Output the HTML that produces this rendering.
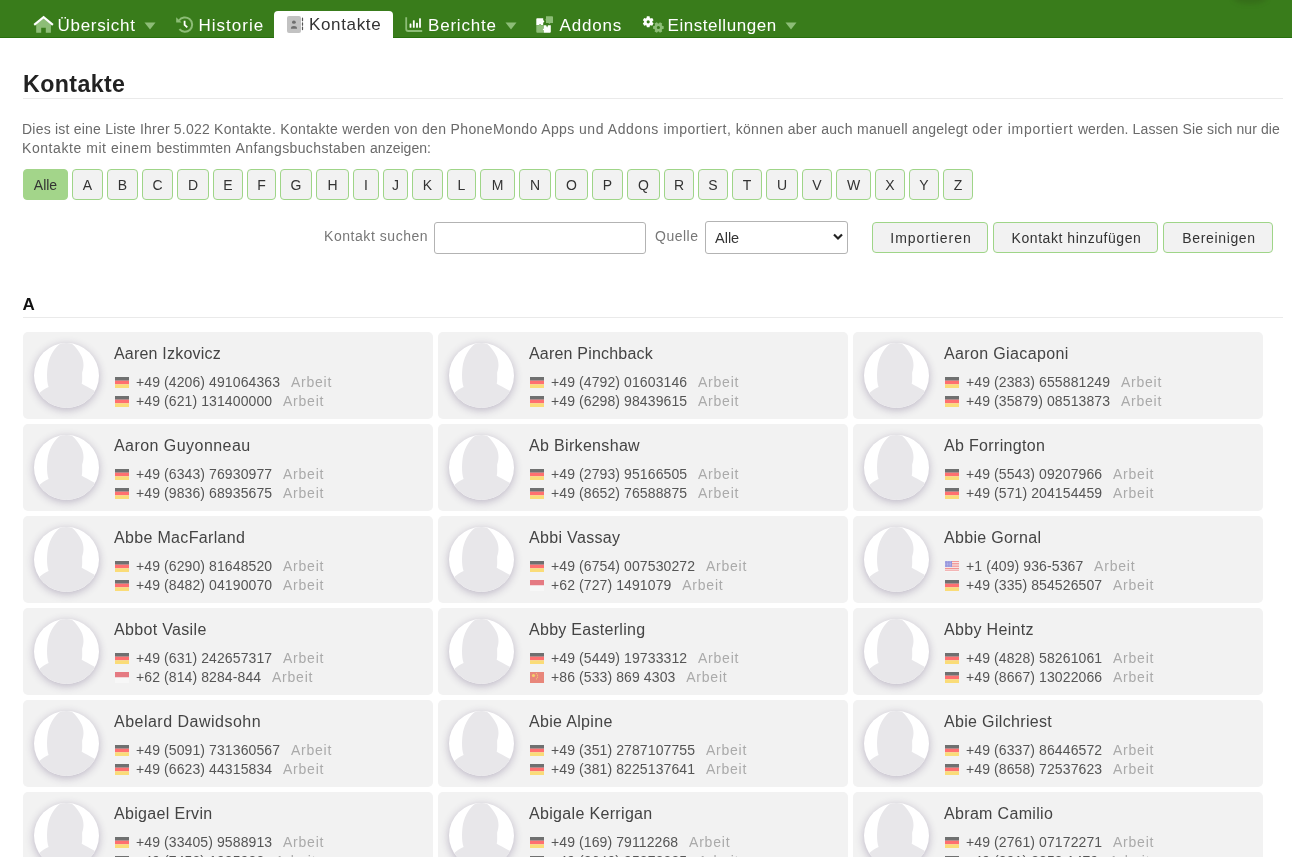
<!DOCTYPE html><html><head><meta charset="utf-8"><title>Kontakte</title><style>
*{box-sizing:border-box}
html,body{will-change:transform;margin:0;padding:0;background:#fff;width:1292px;height:857px;overflow:hidden;font-family:"Liberation Sans",sans-serif}
.t{position:absolute;white-space:nowrap}
.nav{position:absolute;left:0;top:0;width:1292px;height:38px;background:#397c1b;border-bottom:1px solid #27700c}
.navt{color:#fff}
.tab{position:absolute;left:274px;top:11px;width:119px;height:29px;background:#fff;border-radius:4px 4px 0 0}
.ic{position:absolute}
.hr{position:absolute;height:1px;background:#eaeaea}
.para{color:#6a6a6a;letter-spacing:.36px}
.lb{position:absolute;top:169px;height:31px;border:1px solid #9fd588;background:#f2f2f2;border-radius:4px;color:#333;font-size:14px;text-align:center;line-height:31px}
.lb.on{background:#a3d58a;border-color:#a3d58a}
.btn{position:absolute;top:222px;height:31px;border:1px solid #9fd588;background:#f2f2f2;border-radius:4px;color:#333;font-size:14px;text-align:center;line-height:31px;letter-spacing:.4px;padding-left:2px}
.inp{position:absolute;border:1px solid #b3b3b3;border-radius:3px;background:#fff}
.card{position:absolute;width:410px;height:87px;background:#f2f2f2;border-radius:5px;overflow:hidden}
.av{position:absolute;left:11px;top:10.6px;width:65px;height:65px;border-radius:50%;background:#fff;box-shadow:0 2px 9px rgba(60,40,90,.3);overflow:hidden}
.nm{color:#444;letter-spacing:.33px}
.ph{color:#555;letter-spacing:.1px}
.ar{color:#aaa;letter-spacing:.78px}
.flag{position:absolute;width:14px;height:11px}
</style></head><body>
<div class="nav"></div>
<div style="position:absolute;left:1233px;top:-10px;width:34px;height:14px;border-radius:50%;background:rgba(40,60,20,.22);filter:blur(2.5px)"></div>
<div class="tab"></div>
<svg class="ic" style="left:33px;top:15px" width="22" height="19" viewBox="0 0 22 19">
<path d="M3.2 9.2 V17.7 H8.2 V12.8 H12.8 V17.7 H17.9 V9.2 L10.6 3.2 Z" fill="#8dbd77"/>
<path d="M1.2 9.8 L10.6 2.2 L19.9 9.8" fill="none" stroke="#fff" stroke-width="2.2" stroke-linejoin="miter"/>
</svg>
<div class="t navt" style="left:57.5px;top:16.11px;font-size:17px;line-height:20px;letter-spacing:.7px">&Uuml;bersicht</div>
<svg class="ic" style="left:144px;top:21.5px" width="12" height="8" viewBox="0 0 12 8"><path d="M0.5 0.5 H11.5 L6 7.5 Z" fill="#8dbd77"/></svg>
<svg class="ic" style="left:176px;top:16px" width="18" height="18" viewBox="0 0 18 18">
<path d="M3.0 4.5 A7.2 7.2 0 1 1 3.4 13.2" fill="none" stroke="#8dbd77" stroke-width="2"/>
<path d="M0.2 1.2 L0.2 6.6 L5.6 6.6 Z" fill="#8dbd77"/>
<path d="M8.6 4.7 V8.8 L11.3 11.4" fill="none" stroke="#fff" stroke-width="1.8"/>
</svg>
<div class="t navt" style="left:198.5px;top:16.11px;font-size:17px;line-height:20px;letter-spacing:1.0px">Historie</div>
<svg class="ic" style="left:287px;top:16px" width="18" height="18" viewBox="0 0 18 18">
<rect x="0" y="0" width="14" height="17" rx="2" fill="#c2c2c2"/>
<ellipse cx="6.9" cy="6.2" rx="1.9" ry="1.6" fill="#6f6f6f"/>
<path d="M3.9 12.8 C3.9 10.6 5 10 6.9 10 C8.8 10 10.1 10.6 10.1 12.8 Z" fill="#6f6f6f"/>
<path d="M15.5 2.2 V4.7 M15.5 6.9 V9.2 M15.5 11.1 V13.6" stroke="#555" stroke-width="1.2" stroke-linecap="round"/>
</svg>
<div class="t " style="left:309px;top:15.41px;font-size:17px;line-height:20px;color:#333;letter-spacing:.65px">Kontakte</div>
<svg class="ic" style="left:405px;top:17px" width="18" height="16" viewBox="0 0 18 16">
<path d="M1.2 0.2 V12 Q1.2 14 3.2 14 H17.2" fill="none" stroke="#8dbd77" stroke-width="1.8"/>
<rect x="4.6" y="6.5" width="1.8" height="4.3" rx=".5" fill="#fff"/>
<rect x="7.9" y="3.3" width="1.8" height="7.5" rx=".5" fill="#fff"/>
<rect x="11.1" y="5.8" width="1.8" height="5" rx=".5" fill="#fff"/>
<rect x="14.1" y="1.3" width="1.8" height="9.5" rx=".5" fill="#fff"/>
</svg>
<div class="t navt" style="left:428px;top:15.71px;font-size:17px;line-height:20px;letter-spacing:.8px">Berichte</div>
<svg class="ic" style="left:505px;top:21.5px" width="12" height="8" viewBox="0 0 12 8"><path d="M0.5 0.5 H11.5 L6 7.5 Z" fill="#8dbd77"/></svg>
<svg class="ic" style="left:536px;top:16px" width="18" height="17" viewBox="0 0 18 17">
<path d="M0.3 3.1 Q0.3 2.2 1.2 2.2 H7.2 V4.3 Q9.4 5.5 7.2 6.7 V9.2 H5.3 Q4.1 7.2 2.9 9.2 H0.3 Z" fill="#fff"/>
<path d="M10 0.2 H16.1 Q17 0.2 17 1.1 V6.9 H14.3 Q13.4 8.6 12.5 6.9 H10 V4.8 Q8.9 3.6 10 2.4 Z" fill="#8dbd77"/>
<path d="M0.3 9.2 H2.9 Q4.1 7.2 5.3 9.2 H7.8 V12.4 Q5.6 13.4 7.8 14.3 V16.7 H1.2 Q0.3 16.7 0.3 15.8 Z" fill="#8dbd77"/>
<path d="M7.8 9.2 H10.2 L11.1 11.6 L12 9.2 H14.8 V15.8 Q14.8 16.7 13.9 16.7 H7.8 V14.3 Q5.6 13.4 7.8 12.4 Z" fill="#fff"/>
</svg>
<div class="t navt" style="left:559.5px;top:15.71px;font-size:17px;line-height:20px;letter-spacing:.8px">Addons</div>
<svg class="ic" style="left:642px;top:16px" width="24" height="18" viewBox="0 0 24 18">
<path d="M4.51,2.01 L4.85,0.37 L7.55,0.37 L7.89,2.01 L8.64,2.45 L10.23,1.91 L11.58,4.26 L10.32,5.37 L10.32,6.23 L11.58,7.34 L10.23,9.69 L8.64,9.15 L7.89,9.59 L7.55,11.23 L4.85,11.23 L4.51,9.59 L3.76,9.15 L2.17,9.69 L0.82,7.34 L2.08,6.23 L2.08,5.37 L0.82,4.26 L2.17,1.91 L3.76,2.45 Z M7.800000000000001,5.8 A1.6 1.6 0 1 0 4.6,5.8 A1.6 1.6 0 1 0 7.800000000000001,5.8 Z" fill="#fff" fill-rule="evenodd"/>
<path d="M20.12,9.84 L21.74,10.17 L21.74,12.83 L20.12,13.16 L19.69,13.89 L20.22,15.46 L17.92,16.79 L16.83,15.55 L15.97,15.55 L14.88,16.79 L12.58,15.46 L13.11,13.89 L12.68,13.16 L11.06,12.83 L11.06,10.17 L12.68,9.84 L13.11,9.11 L12.58,7.54 L14.88,6.21 L15.97,7.45 L16.83,7.45 L17.92,6.21 L20.22,7.54 L19.69,9.11 Z M18.0,11.5 A1.6 1.6 0 1 0 14.799999999999999,11.5 A1.6 1.6 0 1 0 18.0,11.5 Z" fill="#8dbd77" fill-rule="evenodd"/>
</svg>
<div class="t navt" style="left:667.5px;top:15.71px;font-size:17px;line-height:20px;letter-spacing:.55px">Einstellungen</div>
<svg class="ic" style="left:784.5px;top:21.5px" width="12" height="8" viewBox="0 0 12 8"><path d="M0.5 0.5 H11.5 L6 7.5 Z" fill="#8dbd77"/></svg>
<div class="t " style="left:23px;top:70.26px;font-size:23.2px;line-height:28px;font-weight:bold;color:#222;letter-spacing:.4px">Kontakte</div>
<div class="hr" style="left:23px;top:98px;width:1260px"></div>
<div class="t para" style="left:22px;top:119.15px;font-size:14px;line-height:20px;letter-spacing:0.215px">Dies ist eine Liste Ihrer 5.022</div>
<div class="t para" style="left:214.1px;top:119.15px;font-size:14px;line-height:20px;letter-spacing:0.316px">Kontakte. Kontakte</div>
<div class="t para" style="left:342.3px;top:119.15px;font-size:14px;line-height:20px;letter-spacing:0.311px">werden von den</div>
<div class="t para" style="left:450.5px;top:119.15px;font-size:14px;line-height:20px;letter-spacing:0.386px">PhoneMondo Apps</div>
<div class="t para" style="left:578.9px;top:119.15px;font-size:14px;line-height:20px;letter-spacing:0.604px">und Addons</div>
<div class="t para" style="left:663.4px;top:119.15px;font-size:14px;line-height:20px;letter-spacing:0.515px">importiert,</div>
<div class="t para" style="left:735.7px;top:119.15px;font-size:14px;line-height:20px;letter-spacing:0.313px">können aber auch</div>
<div class="t para" style="left:857px;top:119.15px;font-size:14px;line-height:20px;letter-spacing:0.275px">manuell angelegt</div>
<div class="t para" style="left:972.2px;top:119.15px;font-size:14px;line-height:20px;letter-spacing:0.721px">oder importiert</div>
<div class="t para" style="left:1077.9px;top:119.15px;font-size:14px;line-height:20px;letter-spacing:0.124px">werden. Lassen</div>
<div class="t para" style="left:1182.5px;top:119.15px;font-size:14px;line-height:20px;letter-spacing:0.111px">Sie sich nur die</div>
<div class="t para" style="left:22px;top:138.15px;font-size:14px;line-height:20px;letter-spacing:0.561px">Kontakte mit einem</div>
<div class="t para" style="left:156.4px;top:138.15px;font-size:14px;line-height:20px;letter-spacing:0.259px">bestimmten</div>
<div class="t para" style="left:235.5px;top:138.15px;font-size:14px;line-height:20px;letter-spacing:0.38px">Anfangsbuchstaben</div>
<div class="t para" style="left:370px;top:138.15px;font-size:14px;line-height:20px;letter-spacing:0.031px">anzeigen:</div>
<div class="lb on" style="left:23px;width:45px">Alle</div>
<div class="lb" style="left:72px;width:31px">A</div>
<div class="lb" style="left:107px;width:31px">B</div>
<div class="lb" style="left:142px;width:31px">C</div>
<div class="lb" style="left:177px;width:32px">D</div>
<div class="lb" style="left:213px;width:30px">E</div>
<div class="lb" style="left:247px;width:29px">F</div>
<div class="lb" style="left:280px;width:32px">G</div>
<div class="lb" style="left:316px;width:33px">H</div>
<div class="lb" style="left:353px;width:26px">I</div>
<div class="lb" style="left:383px;width:25px">J</div>
<div class="lb" style="left:412px;width:31px">K</div>
<div class="lb" style="left:447px;width:29px">L</div>
<div class="lb" style="left:480px;width:35px">M</div>
<div class="lb" style="left:519px;width:32px">N</div>
<div class="lb" style="left:555px;width:33px">O</div>
<div class="lb" style="left:592px;width:31px">P</div>
<div class="lb" style="left:627px;width:33px">Q</div>
<div class="lb" style="left:664px;width:30px">R</div>
<div class="lb" style="left:698px;width:30px">S</div>
<div class="lb" style="left:732px;width:30px">T</div>
<div class="lb" style="left:766px;width:32px">U</div>
<div class="lb" style="left:802px;width:30px">V</div>
<div class="lb" style="left:836px;width:35px">W</div>
<div class="lb" style="left:875px;width:30px">X</div>
<div class="lb" style="left:909px;width:30px">Y</div>
<div class="lb" style="left:943px;width:30px">Z</div>
<div class="t " style="left:324px;top:226.15px;font-size:14px;line-height:20px;color:#777;letter-spacing:.55px">Kontakt suchen</div>
<div class="inp" style="left:434px;top:222px;width:212px;height:32px"></div>
<div class="t " style="left:655px;top:225.65px;font-size:14px;line-height:20px;color:#777;letter-spacing:.5px">Quelle</div>
<div class="inp" style="left:705px;top:221px;width:143px;height:33px"></div>
<div class="t " style="left:715px;top:227.97px;font-size:14.5px;line-height:20px;color:#333">Alle</div>
<svg class="ic" style="left:833px;top:233px" width="10" height="8" viewBox="0 0 10 8"><path d="M1 1.5 L5 5.5 L9 1.5" fill="none" stroke="#222" stroke-width="2.2"/></svg>
<div class="btn" style="left:872px;width:116px;letter-spacing:.95px">Importieren</div>
<div class="btn" style="left:993px;width:165px;letter-spacing:.55px">Kontakt hinzufügen</div>
<div class="btn" style="left:1163px;width:110px;letter-spacing:.65px">Bereinigen</div>
<div class="t " style="left:22.5px;top:294.81px;font-size:17px;line-height:20px;font-weight:bold;color:#111">A</div>
<div class="hr" style="left:23px;top:317px;width:1260px"></div>
<div class="card" style="left:23px;top:332px"><div class="av"><svg width="65" height="65" viewBox="0 0 65 65" style="position:absolute;left:0;top:0"><path d="M26.7,0.5 C21,4 16,12 14,21 C12.8,28 12.4,38 14.6,44 C11,45.5 8,47.5 4,51 L-5,58 L-5,70 L70,70 L70,54 L61,48 C55,44.5 51,43 47.7,40.8 C48.6,37 48,33 48.2,29.3 C49.5,26 50.5,20 47.7,13.5 C45,8 41,3 38.2,1 L32,-1 Z" fill="#e8e7ea"/></svg></div><div class="t nm" style="left:91px;top:12.45px;font-size:16px;line-height:20px;letter-spacing:0.2px">Aaren Izkovicz</div><div style="position:absolute;left:92px;top:45px"><svg class="flag" viewBox="0 0 14 11"><rect width="14" height="3.7" fill="#6f7070"/><rect y="3.7" width="14" height="3.6" fill="#ff7070"/><rect y="7.3" width="14" height="3.7" fill="#fadc78"/></svg></div><div class="t" style="left:113px;top:39.55px;font-size:14px;line-height:20px"><span class="ph">+49 (4206) 491064363</span><span class="ar" style="margin-left:10.8px">Arbeit</span></div><div style="position:absolute;left:92px;top:64px"><svg class="flag" viewBox="0 0 14 11"><rect width="14" height="3.7" fill="#6f7070"/><rect y="3.7" width="14" height="3.6" fill="#ff7070"/><rect y="7.3" width="14" height="3.7" fill="#fadc78"/></svg></div><div class="t" style="left:113px;top:58.55px;font-size:14px;line-height:20px"><span class="ph">+49 (621) 131400000</span><span class="ar" style="margin-left:10.8px">Arbeit</span></div></div>
<div class="card" style="left:438px;top:332px"><div class="av"><svg width="65" height="65" viewBox="0 0 65 65" style="position:absolute;left:0;top:0"><path d="M26.7,0.5 C21,4 16,12 14,21 C12.8,28 12.4,38 14.6,44 C11,45.5 8,47.5 4,51 L-5,58 L-5,70 L70,70 L70,54 L61,48 C55,44.5 51,43 47.7,40.8 C48.6,37 48,33 48.2,29.3 C49.5,26 50.5,20 47.7,13.5 C45,8 41,3 38.2,1 L32,-1 Z" fill="#e8e7ea"/></svg></div><div class="t nm" style="left:91px;top:12.45px;font-size:16px;line-height:20px;letter-spacing:0.2px">Aaren Pinchback</div><div style="position:absolute;left:92px;top:45px"><svg class="flag" viewBox="0 0 14 11"><rect width="14" height="3.7" fill="#6f7070"/><rect y="3.7" width="14" height="3.6" fill="#ff7070"/><rect y="7.3" width="14" height="3.7" fill="#fadc78"/></svg></div><div class="t" style="left:113px;top:39.55px;font-size:14px;line-height:20px"><span class="ph">+49 (4792) 01603146</span><span class="ar" style="margin-left:10.8px">Arbeit</span></div><div style="position:absolute;left:92px;top:64px"><svg class="flag" viewBox="0 0 14 11"><rect width="14" height="3.7" fill="#6f7070"/><rect y="3.7" width="14" height="3.6" fill="#ff7070"/><rect y="7.3" width="14" height="3.7" fill="#fadc78"/></svg></div><div class="t" style="left:113px;top:58.55px;font-size:14px;line-height:20px"><span class="ph">+49 (6298) 98439615</span><span class="ar" style="margin-left:10.8px">Arbeit</span></div></div>
<div class="card" style="left:853px;top:332px"><div class="av"><svg width="65" height="65" viewBox="0 0 65 65" style="position:absolute;left:0;top:0"><path d="M26.7,0.5 C21,4 16,12 14,21 C12.8,28 12.4,38 14.6,44 C11,45.5 8,47.5 4,51 L-5,58 L-5,70 L70,70 L70,54 L61,48 C55,44.5 51,43 47.7,40.8 C48.6,37 48,33 48.2,29.3 C49.5,26 50.5,20 47.7,13.5 C45,8 41,3 38.2,1 L32,-1 Z" fill="#e8e7ea"/></svg></div><div class="t nm" style="left:91px;top:12.45px;font-size:16px;line-height:20px;letter-spacing:0.36px">Aaron Giacaponi</div><div style="position:absolute;left:92px;top:45px"><svg class="flag" viewBox="0 0 14 11"><rect width="14" height="3.7" fill="#6f7070"/><rect y="3.7" width="14" height="3.6" fill="#ff7070"/><rect y="7.3" width="14" height="3.7" fill="#fadc78"/></svg></div><div class="t" style="left:113px;top:39.55px;font-size:14px;line-height:20px"><span class="ph">+49 (2383) 655881249</span><span class="ar" style="margin-left:10.8px">Arbeit</span></div><div style="position:absolute;left:92px;top:64px"><svg class="flag" viewBox="0 0 14 11"><rect width="14" height="3.7" fill="#6f7070"/><rect y="3.7" width="14" height="3.6" fill="#ff7070"/><rect y="7.3" width="14" height="3.7" fill="#fadc78"/></svg></div><div class="t" style="left:113px;top:58.55px;font-size:14px;line-height:20px"><span class="ph">+49 (35879) 08513873</span><span class="ar" style="margin-left:10.8px">Arbeit</span></div></div>
<div class="card" style="left:23px;top:424px"><div class="av"><svg width="65" height="65" viewBox="0 0 65 65" style="position:absolute;left:0;top:0"><path d="M26.7,0.5 C21,4 16,12 14,21 C12.8,28 12.4,38 14.6,44 C11,45.5 8,47.5 4,51 L-5,58 L-5,70 L70,70 L70,54 L61,48 C55,44.5 51,43 47.7,40.8 C48.6,37 48,33 48.2,29.3 C49.5,26 50.5,20 47.7,13.5 C45,8 41,3 38.2,1 L32,-1 Z" fill="#e8e7ea"/></svg></div><div class="t nm" style="left:91px;top:12.45px;font-size:16px;line-height:20px;letter-spacing:0.45px">Aaron Guyonneau</div><div style="position:absolute;left:92px;top:45px"><svg class="flag" viewBox="0 0 14 11"><rect width="14" height="3.7" fill="#6f7070"/><rect y="3.7" width="14" height="3.6" fill="#ff7070"/><rect y="7.3" width="14" height="3.7" fill="#fadc78"/></svg></div><div class="t" style="left:113px;top:39.55px;font-size:14px;line-height:20px"><span class="ph">+49 (6343) 76930977</span><span class="ar" style="margin-left:10.8px">Arbeit</span></div><div style="position:absolute;left:92px;top:64px"><svg class="flag" viewBox="0 0 14 11"><rect width="14" height="3.7" fill="#6f7070"/><rect y="3.7" width="14" height="3.6" fill="#ff7070"/><rect y="7.3" width="14" height="3.7" fill="#fadc78"/></svg></div><div class="t" style="left:113px;top:58.55px;font-size:14px;line-height:20px"><span class="ph">+49 (9836) 68935675</span><span class="ar" style="margin-left:10.8px">Arbeit</span></div></div>
<div class="card" style="left:438px;top:424px"><div class="av"><svg width="65" height="65" viewBox="0 0 65 65" style="position:absolute;left:0;top:0"><path d="M26.7,0.5 C21,4 16,12 14,21 C12.8,28 12.4,38 14.6,44 C11,45.5 8,47.5 4,51 L-5,58 L-5,70 L70,70 L70,54 L61,48 C55,44.5 51,43 47.7,40.8 C48.6,37 48,33 48.2,29.3 C49.5,26 50.5,20 47.7,13.5 C45,8 41,3 38.2,1 L32,-1 Z" fill="#e8e7ea"/></svg></div><div class="t nm" style="left:91px;top:12.45px;font-size:16px;line-height:20px;">Ab Birkenshaw</div><div style="position:absolute;left:92px;top:45px"><svg class="flag" viewBox="0 0 14 11"><rect width="14" height="3.7" fill="#6f7070"/><rect y="3.7" width="14" height="3.6" fill="#ff7070"/><rect y="7.3" width="14" height="3.7" fill="#fadc78"/></svg></div><div class="t" style="left:113px;top:39.55px;font-size:14px;line-height:20px"><span class="ph">+49 (2793) 95166505</span><span class="ar" style="margin-left:10.8px">Arbeit</span></div><div style="position:absolute;left:92px;top:64px"><svg class="flag" viewBox="0 0 14 11"><rect width="14" height="3.7" fill="#6f7070"/><rect y="3.7" width="14" height="3.6" fill="#ff7070"/><rect y="7.3" width="14" height="3.7" fill="#fadc78"/></svg></div><div class="t" style="left:113px;top:58.55px;font-size:14px;line-height:20px"><span class="ph">+49 (8652) 76588875</span><span class="ar" style="margin-left:10.8px">Arbeit</span></div></div>
<div class="card" style="left:853px;top:424px"><div class="av"><svg width="65" height="65" viewBox="0 0 65 65" style="position:absolute;left:0;top:0"><path d="M26.7,0.5 C21,4 16,12 14,21 C12.8,28 12.4,38 14.6,44 C11,45.5 8,47.5 4,51 L-5,58 L-5,70 L70,70 L70,54 L61,48 C55,44.5 51,43 47.7,40.8 C48.6,37 48,33 48.2,29.3 C49.5,26 50.5,20 47.7,13.5 C45,8 41,3 38.2,1 L32,-1 Z" fill="#e8e7ea"/></svg></div><div class="t nm" style="left:91px;top:12.45px;font-size:16px;line-height:20px;">Ab Forrington</div><div style="position:absolute;left:92px;top:45px"><svg class="flag" viewBox="0 0 14 11"><rect width="14" height="3.7" fill="#6f7070"/><rect y="3.7" width="14" height="3.6" fill="#ff7070"/><rect y="7.3" width="14" height="3.7" fill="#fadc78"/></svg></div><div class="t" style="left:113px;top:39.55px;font-size:14px;line-height:20px"><span class="ph">+49 (5543) 09207966</span><span class="ar" style="margin-left:10.8px">Arbeit</span></div><div style="position:absolute;left:92px;top:64px"><svg class="flag" viewBox="0 0 14 11"><rect width="14" height="3.7" fill="#6f7070"/><rect y="3.7" width="14" height="3.6" fill="#ff7070"/><rect y="7.3" width="14" height="3.7" fill="#fadc78"/></svg></div><div class="t" style="left:113px;top:58.55px;font-size:14px;line-height:20px"><span class="ph">+49 (571) 204154459</span><span class="ar" style="margin-left:10.8px">Arbeit</span></div></div>
<div class="card" style="left:23px;top:516px"><div class="av"><svg width="65" height="65" viewBox="0 0 65 65" style="position:absolute;left:0;top:0"><path d="M26.7,0.5 C21,4 16,12 14,21 C12.8,28 12.4,38 14.6,44 C11,45.5 8,47.5 4,51 L-5,58 L-5,70 L70,70 L70,54 L61,48 C55,44.5 51,43 47.7,40.8 C48.6,37 48,33 48.2,29.3 C49.5,26 50.5,20 47.7,13.5 C45,8 41,3 38.2,1 L32,-1 Z" fill="#e8e7ea"/></svg></div><div class="t nm" style="left:91px;top:12.45px;font-size:16px;line-height:20px;">Abbe MacFarland</div><div style="position:absolute;left:92px;top:45px"><svg class="flag" viewBox="0 0 14 11"><rect width="14" height="3.7" fill="#6f7070"/><rect y="3.7" width="14" height="3.6" fill="#ff7070"/><rect y="7.3" width="14" height="3.7" fill="#fadc78"/></svg></div><div class="t" style="left:113px;top:39.55px;font-size:14px;line-height:20px"><span class="ph">+49 (6290) 81648520</span><span class="ar" style="margin-left:10.8px">Arbeit</span></div><div style="position:absolute;left:92px;top:64px"><svg class="flag" viewBox="0 0 14 11"><rect width="14" height="3.7" fill="#6f7070"/><rect y="3.7" width="14" height="3.6" fill="#ff7070"/><rect y="7.3" width="14" height="3.7" fill="#fadc78"/></svg></div><div class="t" style="left:113px;top:58.55px;font-size:14px;line-height:20px"><span class="ph">+49 (8482) 04190070</span><span class="ar" style="margin-left:10.8px">Arbeit</span></div></div>
<div class="card" style="left:438px;top:516px"><div class="av"><svg width="65" height="65" viewBox="0 0 65 65" style="position:absolute;left:0;top:0"><path d="M26.7,0.5 C21,4 16,12 14,21 C12.8,28 12.4,38 14.6,44 C11,45.5 8,47.5 4,51 L-5,58 L-5,70 L70,70 L70,54 L61,48 C55,44.5 51,43 47.7,40.8 C48.6,37 48,33 48.2,29.3 C49.5,26 50.5,20 47.7,13.5 C45,8 41,3 38.2,1 L32,-1 Z" fill="#e8e7ea"/></svg></div><div class="t nm" style="left:91px;top:12.45px;font-size:16px;line-height:20px;">Abbi Vassay</div><div style="position:absolute;left:92px;top:45px"><svg class="flag" viewBox="0 0 14 11"><rect width="14" height="3.7" fill="#6f7070"/><rect y="3.7" width="14" height="3.6" fill="#ff7070"/><rect y="7.3" width="14" height="3.7" fill="#fadc78"/></svg></div><div class="t" style="left:113px;top:39.55px;font-size:14px;line-height:20px"><span class="ph">+49 (6754) 007530272</span><span class="ar" style="margin-left:10.8px">Arbeit</span></div><div style="position:absolute;left:92px;top:64px"><svg class="flag" viewBox="0 0 14 11"><rect width="14" height="5.5" fill="#e57a82"/><rect y="5.5" width="14" height="5.5" fill="#f7f7f7"/></svg></div><div class="t" style="left:113px;top:58.55px;font-size:14px;line-height:20px"><span class="ph">+62 (727) 1491079</span><span class="ar" style="margin-left:10.8px">Arbeit</span></div></div>
<div class="card" style="left:853px;top:516px"><div class="av"><svg width="65" height="65" viewBox="0 0 65 65" style="position:absolute;left:0;top:0"><path d="M26.7,0.5 C21,4 16,12 14,21 C12.8,28 12.4,38 14.6,44 C11,45.5 8,47.5 4,51 L-5,58 L-5,70 L70,70 L70,54 L61,48 C55,44.5 51,43 47.7,40.8 C48.6,37 48,33 48.2,29.3 C49.5,26 50.5,20 47.7,13.5 C45,8 41,3 38.2,1 L32,-1 Z" fill="#e8e7ea"/></svg></div><div class="t nm" style="left:91px;top:12.45px;font-size:16px;line-height:20px;">Abbie Gornal</div><div style="position:absolute;left:92px;top:45px"><svg class="flag" viewBox="0 0 14 11"><rect width="14" height="11" fill="#f7f7f7"/><rect y="0.20" width="14" height="0.85" fill="#f08080"/><rect y="1.90" width="14" height="0.85" fill="#f08080"/><rect y="3.60" width="14" height="0.85" fill="#f08080"/><rect y="5.30" width="14" height="0.85" fill="#f08080"/><rect y="7.00" width="14" height="0.85" fill="#f08080"/><rect y="8.70" width="14" height="0.85" fill="#f08080"/><rect width="7" height="6" fill="#9494dc"/><rect x="0.5" y="0.5" width=".7" height=".6" fill="#d8d8f4"/><rect x="0.5" y="1.9" width=".7" height=".6" fill="#d8d8f4"/><rect x="0.5" y="3.3" width=".7" height=".6" fill="#d8d8f4"/><rect x="0.5" y="4.7" width=".7" height=".6" fill="#d8d8f4"/><rect x="2.1" y="0.5" width=".7" height=".6" fill="#d8d8f4"/><rect x="2.1" y="1.9" width=".7" height=".6" fill="#d8d8f4"/><rect x="2.1" y="3.3" width=".7" height=".6" fill="#d8d8f4"/><rect x="2.1" y="4.7" width=".7" height=".6" fill="#d8d8f4"/><rect x="3.7" y="0.5" width=".7" height=".6" fill="#d8d8f4"/><rect x="3.7" y="1.9" width=".7" height=".6" fill="#d8d8f4"/><rect x="3.7" y="3.3" width=".7" height=".6" fill="#d8d8f4"/><rect x="3.7" y="4.7" width=".7" height=".6" fill="#d8d8f4"/><rect x="5.3" y="0.5" width=".7" height=".6" fill="#d8d8f4"/><rect x="5.3" y="1.9" width=".7" height=".6" fill="#d8d8f4"/><rect x="5.3" y="3.3" width=".7" height=".6" fill="#d8d8f4"/><rect x="5.3" y="4.7" width=".7" height=".6" fill="#d8d8f4"/></svg></div><div class="t" style="left:113px;top:39.55px;font-size:14px;line-height:20px"><span class="ph">+1 (409) 936-5367</span><span class="ar" style="margin-left:10.8px">Arbeit</span></div><div style="position:absolute;left:92px;top:64px"><svg class="flag" viewBox="0 0 14 11"><rect width="14" height="3.7" fill="#6f7070"/><rect y="3.7" width="14" height="3.6" fill="#ff7070"/><rect y="7.3" width="14" height="3.7" fill="#fadc78"/></svg></div><div class="t" style="left:113px;top:58.55px;font-size:14px;line-height:20px"><span class="ph">+49 (335) 854526507</span><span class="ar" style="margin-left:10.8px">Arbeit</span></div></div>
<div class="card" style="left:23px;top:608px"><div class="av"><svg width="65" height="65" viewBox="0 0 65 65" style="position:absolute;left:0;top:0"><path d="M26.7,0.5 C21,4 16,12 14,21 C12.8,28 12.4,38 14.6,44 C11,45.5 8,47.5 4,51 L-5,58 L-5,70 L70,70 L70,54 L61,48 C55,44.5 51,43 47.7,40.8 C48.6,37 48,33 48.2,29.3 C49.5,26 50.5,20 47.7,13.5 C45,8 41,3 38.2,1 L32,-1 Z" fill="#e8e7ea"/></svg></div><div class="t nm" style="left:91px;top:12.45px;font-size:16px;line-height:20px;">Abbot Vasile</div><div style="position:absolute;left:92px;top:45px"><svg class="flag" viewBox="0 0 14 11"><rect width="14" height="3.7" fill="#6f7070"/><rect y="3.7" width="14" height="3.6" fill="#ff7070"/><rect y="7.3" width="14" height="3.7" fill="#fadc78"/></svg></div><div class="t" style="left:113px;top:39.55px;font-size:14px;line-height:20px"><span class="ph">+49 (631) 242657317</span><span class="ar" style="margin-left:10.8px">Arbeit</span></div><div style="position:absolute;left:92px;top:64px"><svg class="flag" viewBox="0 0 14 11"><rect width="14" height="5.5" fill="#e57a82"/><rect y="5.5" width="14" height="5.5" fill="#f7f7f7"/></svg></div><div class="t" style="left:113px;top:58.55px;font-size:14px;line-height:20px"><span class="ph">+62 (814) 8284-844</span><span class="ar" style="margin-left:10.8px">Arbeit</span></div></div>
<div class="card" style="left:438px;top:608px"><div class="av"><svg width="65" height="65" viewBox="0 0 65 65" style="position:absolute;left:0;top:0"><path d="M26.7,0.5 C21,4 16,12 14,21 C12.8,28 12.4,38 14.6,44 C11,45.5 8,47.5 4,51 L-5,58 L-5,70 L70,70 L70,54 L61,48 C55,44.5 51,43 47.7,40.8 C48.6,37 48,33 48.2,29.3 C49.5,26 50.5,20 47.7,13.5 C45,8 41,3 38.2,1 L32,-1 Z" fill="#e8e7ea"/></svg></div><div class="t nm" style="left:91px;top:12.45px;font-size:16px;line-height:20px;letter-spacing:0.29px">Abby Easterling</div><div style="position:absolute;left:92px;top:45px"><svg class="flag" viewBox="0 0 14 11"><rect width="14" height="3.7" fill="#6f7070"/><rect y="3.7" width="14" height="3.6" fill="#ff7070"/><rect y="7.3" width="14" height="3.7" fill="#fadc78"/></svg></div><div class="t" style="left:113px;top:39.55px;font-size:14px;line-height:20px"><span class="ph">+49 (5449) 19733312</span><span class="ar" style="margin-left:10.8px">Arbeit</span></div><div style="position:absolute;left:92px;top:64px"><svg class="flag" viewBox="0 0 14 11"><rect width="14" height="11" fill="#e8867a"/><circle cx="3.5" cy="3.5" r="1.6" fill="#f5d06a"/><circle cx="6.5" cy="1.6" r=".6" fill="#f5d06a"/><circle cx="7.5" cy="3.2" r=".6" fill="#f5d06a"/><circle cx="7.5" cy="5.2" r=".6" fill="#f5d06a"/><circle cx="6.5" cy="6.8" r=".6" fill="#f5d06a"/></svg></div><div class="t" style="left:113px;top:58.55px;font-size:14px;line-height:20px"><span class="ph">+86 (533) 869 4303</span><span class="ar" style="margin-left:10.8px">Arbeit</span></div></div>
<div class="card" style="left:853px;top:608px"><div class="av"><svg width="65" height="65" viewBox="0 0 65 65" style="position:absolute;left:0;top:0"><path d="M26.7,0.5 C21,4 16,12 14,21 C12.8,28 12.4,38 14.6,44 C11,45.5 8,47.5 4,51 L-5,58 L-5,70 L70,70 L70,54 L61,48 C55,44.5 51,43 47.7,40.8 C48.6,37 48,33 48.2,29.3 C49.5,26 50.5,20 47.7,13.5 C45,8 41,3 38.2,1 L32,-1 Z" fill="#e8e7ea"/></svg></div><div class="t nm" style="left:91px;top:12.45px;font-size:16px;line-height:20px;">Abby Heintz</div><div style="position:absolute;left:92px;top:45px"><svg class="flag" viewBox="0 0 14 11"><rect width="14" height="3.7" fill="#6f7070"/><rect y="3.7" width="14" height="3.6" fill="#ff7070"/><rect y="7.3" width="14" height="3.7" fill="#fadc78"/></svg></div><div class="t" style="left:113px;top:39.55px;font-size:14px;line-height:20px"><span class="ph">+49 (4828) 58261061</span><span class="ar" style="margin-left:10.8px">Arbeit</span></div><div style="position:absolute;left:92px;top:64px"><svg class="flag" viewBox="0 0 14 11"><rect width="14" height="3.7" fill="#6f7070"/><rect y="3.7" width="14" height="3.6" fill="#ff7070"/><rect y="7.3" width="14" height="3.7" fill="#fadc78"/></svg></div><div class="t" style="left:113px;top:58.55px;font-size:14px;line-height:20px"><span class="ph">+49 (8667) 13022066</span><span class="ar" style="margin-left:10.8px">Arbeit</span></div></div>
<div class="card" style="left:23px;top:700px"><div class="av"><svg width="65" height="65" viewBox="0 0 65 65" style="position:absolute;left:0;top:0"><path d="M26.7,0.5 C21,4 16,12 14,21 C12.8,28 12.4,38 14.6,44 C11,45.5 8,47.5 4,51 L-5,58 L-5,70 L70,70 L70,54 L61,48 C55,44.5 51,43 47.7,40.8 C48.6,37 48,33 48.2,29.3 C49.5,26 50.5,20 47.7,13.5 C45,8 41,3 38.2,1 L32,-1 Z" fill="#e8e7ea"/></svg></div><div class="t nm" style="left:91px;top:12.45px;font-size:16px;line-height:20px;letter-spacing:0.49px">Abelard Dawidsohn</div><div style="position:absolute;left:92px;top:45px"><svg class="flag" viewBox="0 0 14 11"><rect width="14" height="3.7" fill="#6f7070"/><rect y="3.7" width="14" height="3.6" fill="#ff7070"/><rect y="7.3" width="14" height="3.7" fill="#fadc78"/></svg></div><div class="t" style="left:113px;top:39.55px;font-size:14px;line-height:20px"><span class="ph">+49 (5091) 731360567</span><span class="ar" style="margin-left:10.8px">Arbeit</span></div><div style="position:absolute;left:92px;top:64px"><svg class="flag" viewBox="0 0 14 11"><rect width="14" height="3.7" fill="#6f7070"/><rect y="3.7" width="14" height="3.6" fill="#ff7070"/><rect y="7.3" width="14" height="3.7" fill="#fadc78"/></svg></div><div class="t" style="left:113px;top:58.55px;font-size:14px;line-height:20px"><span class="ph">+49 (6623) 44315834</span><span class="ar" style="margin-left:10.8px">Arbeit</span></div></div>
<div class="card" style="left:438px;top:700px"><div class="av"><svg width="65" height="65" viewBox="0 0 65 65" style="position:absolute;left:0;top:0"><path d="M26.7,0.5 C21,4 16,12 14,21 C12.8,28 12.4,38 14.6,44 C11,45.5 8,47.5 4,51 L-5,58 L-5,70 L70,70 L70,54 L61,48 C55,44.5 51,43 47.7,40.8 C48.6,37 48,33 48.2,29.3 C49.5,26 50.5,20 47.7,13.5 C45,8 41,3 38.2,1 L32,-1 Z" fill="#e8e7ea"/></svg></div><div class="t nm" style="left:91px;top:12.45px;font-size:16px;line-height:20px;">Abie Alpine</div><div style="position:absolute;left:92px;top:45px"><svg class="flag" viewBox="0 0 14 11"><rect width="14" height="3.7" fill="#6f7070"/><rect y="3.7" width="14" height="3.6" fill="#ff7070"/><rect y="7.3" width="14" height="3.7" fill="#fadc78"/></svg></div><div class="t" style="left:113px;top:39.55px;font-size:14px;line-height:20px"><span class="ph">+49 (351) 2787107755</span><span class="ar" style="margin-left:10.8px">Arbeit</span></div><div style="position:absolute;left:92px;top:64px"><svg class="flag" viewBox="0 0 14 11"><rect width="14" height="3.7" fill="#6f7070"/><rect y="3.7" width="14" height="3.6" fill="#ff7070"/><rect y="7.3" width="14" height="3.7" fill="#fadc78"/></svg></div><div class="t" style="left:113px;top:58.55px;font-size:14px;line-height:20px"><span class="ph">+49 (381) 8225137641</span><span class="ar" style="margin-left:10.8px">Arbeit</span></div></div>
<div class="card" style="left:853px;top:700px"><div class="av"><svg width="65" height="65" viewBox="0 0 65 65" style="position:absolute;left:0;top:0"><path d="M26.7,0.5 C21,4 16,12 14,21 C12.8,28 12.4,38 14.6,44 C11,45.5 8,47.5 4,51 L-5,58 L-5,70 L70,70 L70,54 L61,48 C55,44.5 51,43 47.7,40.8 C48.6,37 48,33 48.2,29.3 C49.5,26 50.5,20 47.7,13.5 C45,8 41,3 38.2,1 L32,-1 Z" fill="#e8e7ea"/></svg></div><div class="t nm" style="left:91px;top:12.45px;font-size:16px;line-height:20px;">Abie Gilchriest</div><div style="position:absolute;left:92px;top:45px"><svg class="flag" viewBox="0 0 14 11"><rect width="14" height="3.7" fill="#6f7070"/><rect y="3.7" width="14" height="3.6" fill="#ff7070"/><rect y="7.3" width="14" height="3.7" fill="#fadc78"/></svg></div><div class="t" style="left:113px;top:39.55px;font-size:14px;line-height:20px"><span class="ph">+49 (6337) 86446572</span><span class="ar" style="margin-left:10.8px">Arbeit</span></div><div style="position:absolute;left:92px;top:64px"><svg class="flag" viewBox="0 0 14 11"><rect width="14" height="3.7" fill="#6f7070"/><rect y="3.7" width="14" height="3.6" fill="#ff7070"/><rect y="7.3" width="14" height="3.7" fill="#fadc78"/></svg></div><div class="t" style="left:113px;top:58.55px;font-size:14px;line-height:20px"><span class="ph">+49 (8658) 72537623</span><span class="ar" style="margin-left:10.8px">Arbeit</span></div></div>
<div class="card" style="left:23px;top:792px"><div class="av"><svg width="65" height="65" viewBox="0 0 65 65" style="position:absolute;left:0;top:0"><path d="M26.7,0.5 C21,4 16,12 14,21 C12.8,28 12.4,38 14.6,44 C11,45.5 8,47.5 4,51 L-5,58 L-5,70 L70,70 L70,54 L61,48 C55,44.5 51,43 47.7,40.8 C48.6,37 48,33 48.2,29.3 C49.5,26 50.5,20 47.7,13.5 C45,8 41,3 38.2,1 L32,-1 Z" fill="#e8e7ea"/></svg></div><div class="t nm" style="left:91px;top:12.45px;font-size:16px;line-height:20px;">Abigael Ervin</div><div style="position:absolute;left:92px;top:45px"><svg class="flag" viewBox="0 0 14 11"><rect width="14" height="3.7" fill="#6f7070"/><rect y="3.7" width="14" height="3.6" fill="#ff7070"/><rect y="7.3" width="14" height="3.7" fill="#fadc78"/></svg></div><div class="t" style="left:113px;top:39.55px;font-size:14px;line-height:20px"><span class="ph">+49 (33405) 9588913</span><span class="ar" style="margin-left:10.8px">Arbeit</span></div><div style="position:absolute;left:92px;top:64px"><svg class="flag" viewBox="0 0 14 11"><rect width="14" height="3.7" fill="#6f7070"/><rect y="3.7" width="14" height="3.6" fill="#ff7070"/><rect y="7.3" width="14" height="3.7" fill="#fadc78"/></svg></div><div class="t" style="left:113px;top:58.55px;font-size:14px;line-height:20px"><span class="ph">+49 (7453) 1985983</span><span class="ar" style="margin-left:10.8px">Arbeit</span></div></div>
<div class="card" style="left:438px;top:792px"><div class="av"><svg width="65" height="65" viewBox="0 0 65 65" style="position:absolute;left:0;top:0"><path d="M26.7,0.5 C21,4 16,12 14,21 C12.8,28 12.4,38 14.6,44 C11,45.5 8,47.5 4,51 L-5,58 L-5,70 L70,70 L70,54 L61,48 C55,44.5 51,43 47.7,40.8 C48.6,37 48,33 48.2,29.3 C49.5,26 50.5,20 47.7,13.5 C45,8 41,3 38.2,1 L32,-1 Z" fill="#e8e7ea"/></svg></div><div class="t nm" style="left:91px;top:12.45px;font-size:16px;line-height:20px;">Abigale Kerrigan</div><div style="position:absolute;left:92px;top:45px"><svg class="flag" viewBox="0 0 14 11"><rect width="14" height="3.7" fill="#6f7070"/><rect y="3.7" width="14" height="3.6" fill="#ff7070"/><rect y="7.3" width="14" height="3.7" fill="#fadc78"/></svg></div><div class="t" style="left:113px;top:39.55px;font-size:14px;line-height:20px"><span class="ph">+49 (169) 79112268</span><span class="ar" style="margin-left:10.8px">Arbeit</span></div><div style="position:absolute;left:92px;top:64px"><svg class="flag" viewBox="0 0 14 11"><rect width="14" height="3.7" fill="#6f7070"/><rect y="3.7" width="14" height="3.6" fill="#ff7070"/><rect y="7.3" width="14" height="3.7" fill="#fadc78"/></svg></div><div class="t" style="left:113px;top:58.55px;font-size:14px;line-height:20px"><span class="ph">+49 (2640) 95878385</span><span class="ar" style="margin-left:10.8px">Arbeit</span></div></div>
<div class="card" style="left:853px;top:792px"><div class="av"><svg width="65" height="65" viewBox="0 0 65 65" style="position:absolute;left:0;top:0"><path d="M26.7,0.5 C21,4 16,12 14,21 C12.8,28 12.4,38 14.6,44 C11,45.5 8,47.5 4,51 L-5,58 L-5,70 L70,70 L70,54 L61,48 C55,44.5 51,43 47.7,40.8 C48.6,37 48,33 48.2,29.3 C49.5,26 50.5,20 47.7,13.5 C45,8 41,3 38.2,1 L32,-1 Z" fill="#e8e7ea"/></svg></div><div class="t nm" style="left:91px;top:12.45px;font-size:16px;line-height:20px;">Abram Camilio</div><div style="position:absolute;left:92px;top:45px"><svg class="flag" viewBox="0 0 14 11"><rect width="14" height="3.7" fill="#6f7070"/><rect y="3.7" width="14" height="3.6" fill="#ff7070"/><rect y="7.3" width="14" height="3.7" fill="#fadc78"/></svg></div><div class="t" style="left:113px;top:39.55px;font-size:14px;line-height:20px"><span class="ph">+49 (2761) 07172271</span><span class="ar" style="margin-left:10.8px">Arbeit</span></div><div style="position:absolute;left:92px;top:64px"><svg class="flag" viewBox="0 0 14 11"><rect width="14" height="3.7" fill="#6f7070"/><rect y="3.7" width="14" height="3.6" fill="#ff7070"/><rect y="7.3" width="14" height="3.7" fill="#fadc78"/></svg></div><div class="t" style="left:113px;top:58.55px;font-size:14px;line-height:20px"><span class="ph">+49 (391) 3853 1479</span><span class="ar" style="margin-left:10.8px">Arbeit</span></div></div>
</body></html>
